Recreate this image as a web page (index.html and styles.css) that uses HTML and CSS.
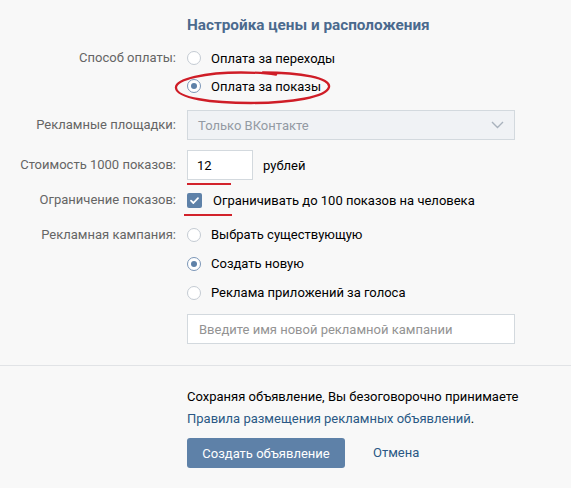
FILE: index.html
```html
<!DOCTYPE html>
<html lang="ru">
<head>
<meta charset="utf-8">
<link rel="stylesheet" href="styles.css">
</head>
<body>
<div class="page">
  <div class="row title-row">
    <div class="label"></div>
    <h1 class="title">Настройка цены и расположения</h1>
  </div>

  <div class="row top">
    <div class="label lh28">Способ оплаты:</div>
    <div class="control">
      <div class="option"><span class="radio"></span>Оплата за переходы</div>
      <div class="option marked"><span class="radio on"></span>Оплата за показы
        <svg class="ellipse" width="164" height="38" viewBox="0 0 164 38"><path d="M92 4.5 C 130 4.5, 160 10, 158 19 C 156 29, 120 35, 80 35 C 40 35, 6 30, 5 20 C 4 11, 35 4.5, 70 4.5 C 80 4.5, 95 5, 105 6.5" fill="none" stroke="#cf1d27" stroke-width="2.3" stroke-linecap="round"/></svg>
      </div>
    </div>
  </div>

  <div class="row gap10">
    <div class="label">Рекламные площадки:</div>
    <div class="control">
      <div class="select">
        <span>Только ВКонтакте</span>
        <svg class="chev" width="13" height="8" viewBox="0 0 13 8"><path d="M1 1 L6.5 6.5 L12 1" fill="none" stroke="#a9b2bd" stroke-width="1.4"/></svg>
      </div>
    </div>
  </div>

  <div class="row gap10">
    <div class="label">Стоимость 1000 показов:</div>
    <div class="control inline">
      <div class="price">12<span class="underline u-price"></span></div>
      <span class="unit">рублей</span>
    </div>
  </div>

  <div class="row gap6">
    <div class="label lh28">Ограничение показов:</div>
    <div class="control">
      <div class="option"><span class="check"><svg width="15" height="15" viewBox="0 0 15 15"><path d="M4 7.6 L6.4 10 L11 5.2" fill="none" stroke="#fff" stroke-width="1.8" stroke-linecap="round" stroke-linejoin="round"/></svg><span class="underline u-check"></span></span>Ограничивать до 100 показов на человека</div>
    </div>
  </div>

  <div class="row top gap6">
    <div class="label lh29">Рекламная кампания:</div>
    <div class="control">
      <div class="option h29"><span class="radio"></span>Выбрать существующую</div>
      <div class="option h29"><span class="radio on"></span>Создать новую</div>
      <div class="option h29"><span class="radio"></span>Реклама приложений за голоса</div>
      <div class="textinput">Введите имя новой рекламной кампании</div>
    </div>
  </div>

  <div class="divider"></div>

  <div class="row">
    <div class="label"></div>
    <div class="control footer">
      <p class="note">Сохраняя объявление, Вы безоговорочно принимаете<br><a class="link">Правила размещения рекламных объявлений</a>.</p>
      <div class="actions">
        <button class="btn">Создать объявление</button>
        <a class="link cancel">Отмена</a>
      </div>
    </div>
  </div>
</div>
</body>
</html>
```

FILE: styles.css
```css
* { box-sizing: border-box; }
html, body { margin: 0; padding: 0; }
body {
  background: #f8f8f8;
  font-family: Roboto, "Liberation Sans", sans-serif;
  font-size: 13px;
  color: #000;
  width: 571px;
  height: 488px;
  overflow: hidden;
}
.page { width: 571px; }
.row {
  display: grid;
  grid-template-columns: 176px 328px;
  column-gap: 11px;
  align-items: center;
}
.row.top { align-items: start; }
.gap10 { margin-top: 10px; }
.gap6 { margin-top: 6px; }
.title-row { padding-top: 15px; height: 44px; align-items: start; }
.title {
  margin: 0;
  font-size: 15.3px;
  line-height: 20px;
  font-weight: 700;
  color: #4b6a8e;
  white-space: nowrap;
}
.label {
  text-align: right;
  color: #656565;
  white-space: nowrap;
  line-height: 16px;
}
.lh28 { line-height: 28px; }
.lh29 { line-height: 29px; }
.control { position: relative; }
.option {
  position: relative;
  display: flex;
  align-items: center;
  height: 28px;
  white-space: nowrap;
}
.option.h29 { height: 29px; }
.radio {
  width: 14px;
  height: 14px;
  border-radius: 50%;
  border: 1px solid #c4cbd3;
  background: #fff;
  margin-right: 10px;
  flex: none;
  display: flex;
  align-items: center;
  justify-content: center;
}
.radio.on { border-color: #7b96b7; }
.radio.on::after {
  content: "";
  width: 6px;
  height: 6px;
  border-radius: 50%;
  background: #5e81a8;
}
.ellipse {
  position: absolute;
  left: -16px;
  top: -4px;
  overflow: visible;
}
.check {
  position: relative;
  width: 15px;
  height: 15px;
  border-radius: 2px;
  background: #5e81a8;
  margin-right: 11px;
  flex: none;
  display: block;
}
.check svg { display: block; }
.underline {
  position: absolute;
  height: 2px;
  background: #d2222b;
}
.u-price { left: -1px; top: 32px; width: 44px; }
.u-check { left: -3px; top: 21px; width: 48px; }
.select {
  height: 30px;
  border: 1px solid #d3d9de;
  background: #f0f2f5;
  color: #939aa3;
  display: flex;
  align-items: center;
  justify-content: space-between;
  padding: 0 10px 0 10px;
}
.chev { display: block; }
.inline { display: flex; align-items: center; }
.price {
  position: relative;
  width: 66px;
  height: 30px;
  border: 1px solid #d3d9de;
  background: #fff;
  padding: 0 9px;
  display: flex;
  align-items: center;
}
.unit { margin-left: 10px; }
.textinput {
  margin-top: 7px;
  height: 30px;
  border: 1px solid #d3d9de;
  background: #fff;
  color: #939393;
  padding: 0 11px;
  display: flex;
  align-items: center;
}
.divider {
  margin-top: 21px;
  height: 1px;
  background: #e1e3e6;
}
.footer { padding-top: 20px; }
.note {
  margin: 0;
  line-height: 22px;
  white-space: nowrap;
}
.link { color: #2a5885; text-decoration: none; }
.actions {
  margin-top: 8px;
  display: flex;
  align-items: center;
  gap: 28px;
}
.btn {
  width: 158px;
  height: 30px;
  border: 0;
  border-radius: 3px;
  background: #5e81a8;
  color: #fff;
  font-family: Roboto, "Liberation Sans", sans-serif;
  font-size: 13px;
  padding: 0;
}
.cancel { line-height: 30px; }
```
